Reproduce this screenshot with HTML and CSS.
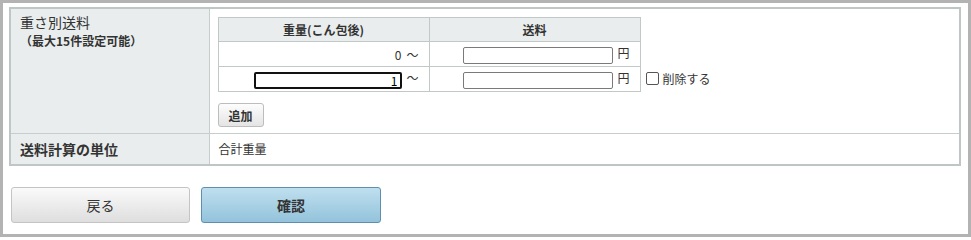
FILE: index.html
```html
<!DOCTYPE html>
<html lang="ja">
<head>
<meta charset="utf-8">
<link rel="stylesheet" href="styles.css">
</head>
<body>
<div class="frame">
  <table class="main">
    <colgroup><col class="col-label"><col class="col-value"></colgroup>
    <tr class="row-weight">
      <th class="label">
        <div class="label-title">重さ別送料</div>
        <div class="label-note">（最大15件設定可能）</div>
      </th>
      <td class="value">
        <table class="rates">
          <tr>
            <th class="rh">重量(こん包後)</th>
            <th class="rh">送料</th>
            <td class="extra"></td>
          </tr>
          <tr>
            <td class="rc"><span class="num">0</span><span class="tilde">〜</span></td>
            <td class="rc"><input class="price" type="text"><span class="yen">円</span></td>
            <td class="extra"></td>
          </tr>
          <tr>
            <td class="rc"><input class="weight" type="text" value="1"><span class="tilde">〜</span></td>
            <td class="rc"><input class="price" type="text"><span class="yen">円</span></td>
            <td class="extra"><label class="del"><span class="box"></span>削除する</label></td>
          </tr>
        </table>
        <button class="add" type="button">追加</button>
      </td>
    </tr>
    <tr class="row-unit">
      <th class="label"><div class="label-title bold">送料計算の単位</div></th>
      <td class="value unit">合計重量</td>
    </tr>
  </table>
  <div class="actions">
    <button class="btn back" type="button">戻る</button>
    <button class="btn confirm" type="button">確認</button>
  </div>
</div>
</body>
</html>
```
FILE: styles.css
```css
html, body {
  margin: 0;
  padding: 0;
  background: #fff;
}
body {
  font-family: "Noto Sans CJK JP", "Noto Sans", sans-serif;
  font-size: 12px;
  color: #333;
}
.frame {
  width: 971px;
  height: 237px;
  box-sizing: border-box;
  border: 3px solid #b3b3b3;
  padding: 4px 7px 0 6px;
}
.main {
  width: 952px;
  table-layout: fixed;
  border-collapse: collapse;
  border: 2px solid #bec6c6;
}
.col-label {
  width: 199px;
}
.main > tbody > tr > th,
.main > tbody > tr > td {
  padding: 0;
}
.label {
  background: #e9eded;
  text-align: left;
  vertical-align: top;
  border-right: 1px solid #c6cdcd;
  font-weight: normal;
}
.row-weight .label {
  padding: 3px 9px 0 9px !important;
  height: 125px;
  box-sizing: border-box;
}
.row-weight > td,
.row-weight > th {
  border-bottom: 1px solid #c6cdcd;
}
.label-title {
  font-size: 14px;
  line-height: 20px;
  color: #333;
}
.row-unit .label-title {
  line-height: 20px;
}
.label-title.bold {
  font-weight: bold;
}
.label-note {
  font-size: 12px;
  line-height: 17px;
  font-weight: bold;
  color: #333;
  padding-left: 0;
}
.value {
  vertical-align: top;
  padding: 8px 0 0 8px !important;
}
.rates {
  border-collapse: collapse;
}
.rh {
  width: 211px;
  height: 24px;
  box-sizing: border-box;
  background: #e9eded;
  border: 1px solid #c0c8c8;
  font-weight: bold;
  font-size: 12px;
  text-align: center;
  padding: 0;
}
.rc {
  height: 25px;
  box-sizing: border-box;
  border: 1px solid #c0c8c8;
  text-align: right;
  padding: 0 10px 0 0;
  white-space: nowrap;
}
.extra {
  padding: 0 0 0 5px;
  white-space: nowrap;
}
.num {
  font-size: 12px;
}
.tilde {
  display: inline-block;
  margin-left: 5px;
  width: 12px;
  text-align: left;
}
.weight {
  width: 148px;
  height: 17px;
  box-sizing: border-box;
  border: 2px solid #111;
  border-radius: 2px;
  text-align: right;
  font-family: inherit;
  font-size: 12px;
  padding: 0 2px;
  vertical-align: middle;
  margin: 0;
}
.price {
  width: 150px;
  height: 17px;
  box-sizing: border-box;
  border: 1px solid #7a7a7a;
  border-radius: 2px;
  font-family: inherit;
  font-size: 12px;
  padding: 0 2px;
  vertical-align: middle;
  margin: 0;
}
.yen {
  display: inline-block;
  margin-left: 4px;
}
.del {
  display: inline-flex;
  align-items: center;
  gap: 4px;
}
.box {
  width: 11px;
  height: 11px;
  border: 1px solid #555;
  border-radius: 2px;
  background: #fff;
}
.add {
  margin-top: 11px;
  width: 46px;
  height: 24px;
  border: 1px solid #bdbdbd;
  border-radius: 3px;
  background: linear-gradient(#fdfdfd, #e4e4e4);
  font-family: inherit;
  font-weight: bold;
  font-size: 12px;
  color: #333;
  padding: 0;
}
.row-unit .label {
  height: 30px;
  vertical-align: middle;
  padding: 0 9px !important;
}
.unit {
  vertical-align: middle;
  padding: 0 0 0 9px !important;
}
.actions {
  display: flex;
  gap: 11px;
  margin: 21px 0 0 2px;
}
.btn {
  width: 179px;
  height: 36px;
  border-radius: 3px;
  font-family: inherit;
  font-size: 14px;
  padding: 0;
  color: #333;
}
.back {
  border: 1px solid #c4c4c4;
  background: linear-gradient(#fafafa, #dedede);
}
.confirm {
  width: 180px;
  font-weight: bold;
  border: 1px solid #5e8fae;
  background: linear-gradient(#bfdfef, #93c3db);
}
```
